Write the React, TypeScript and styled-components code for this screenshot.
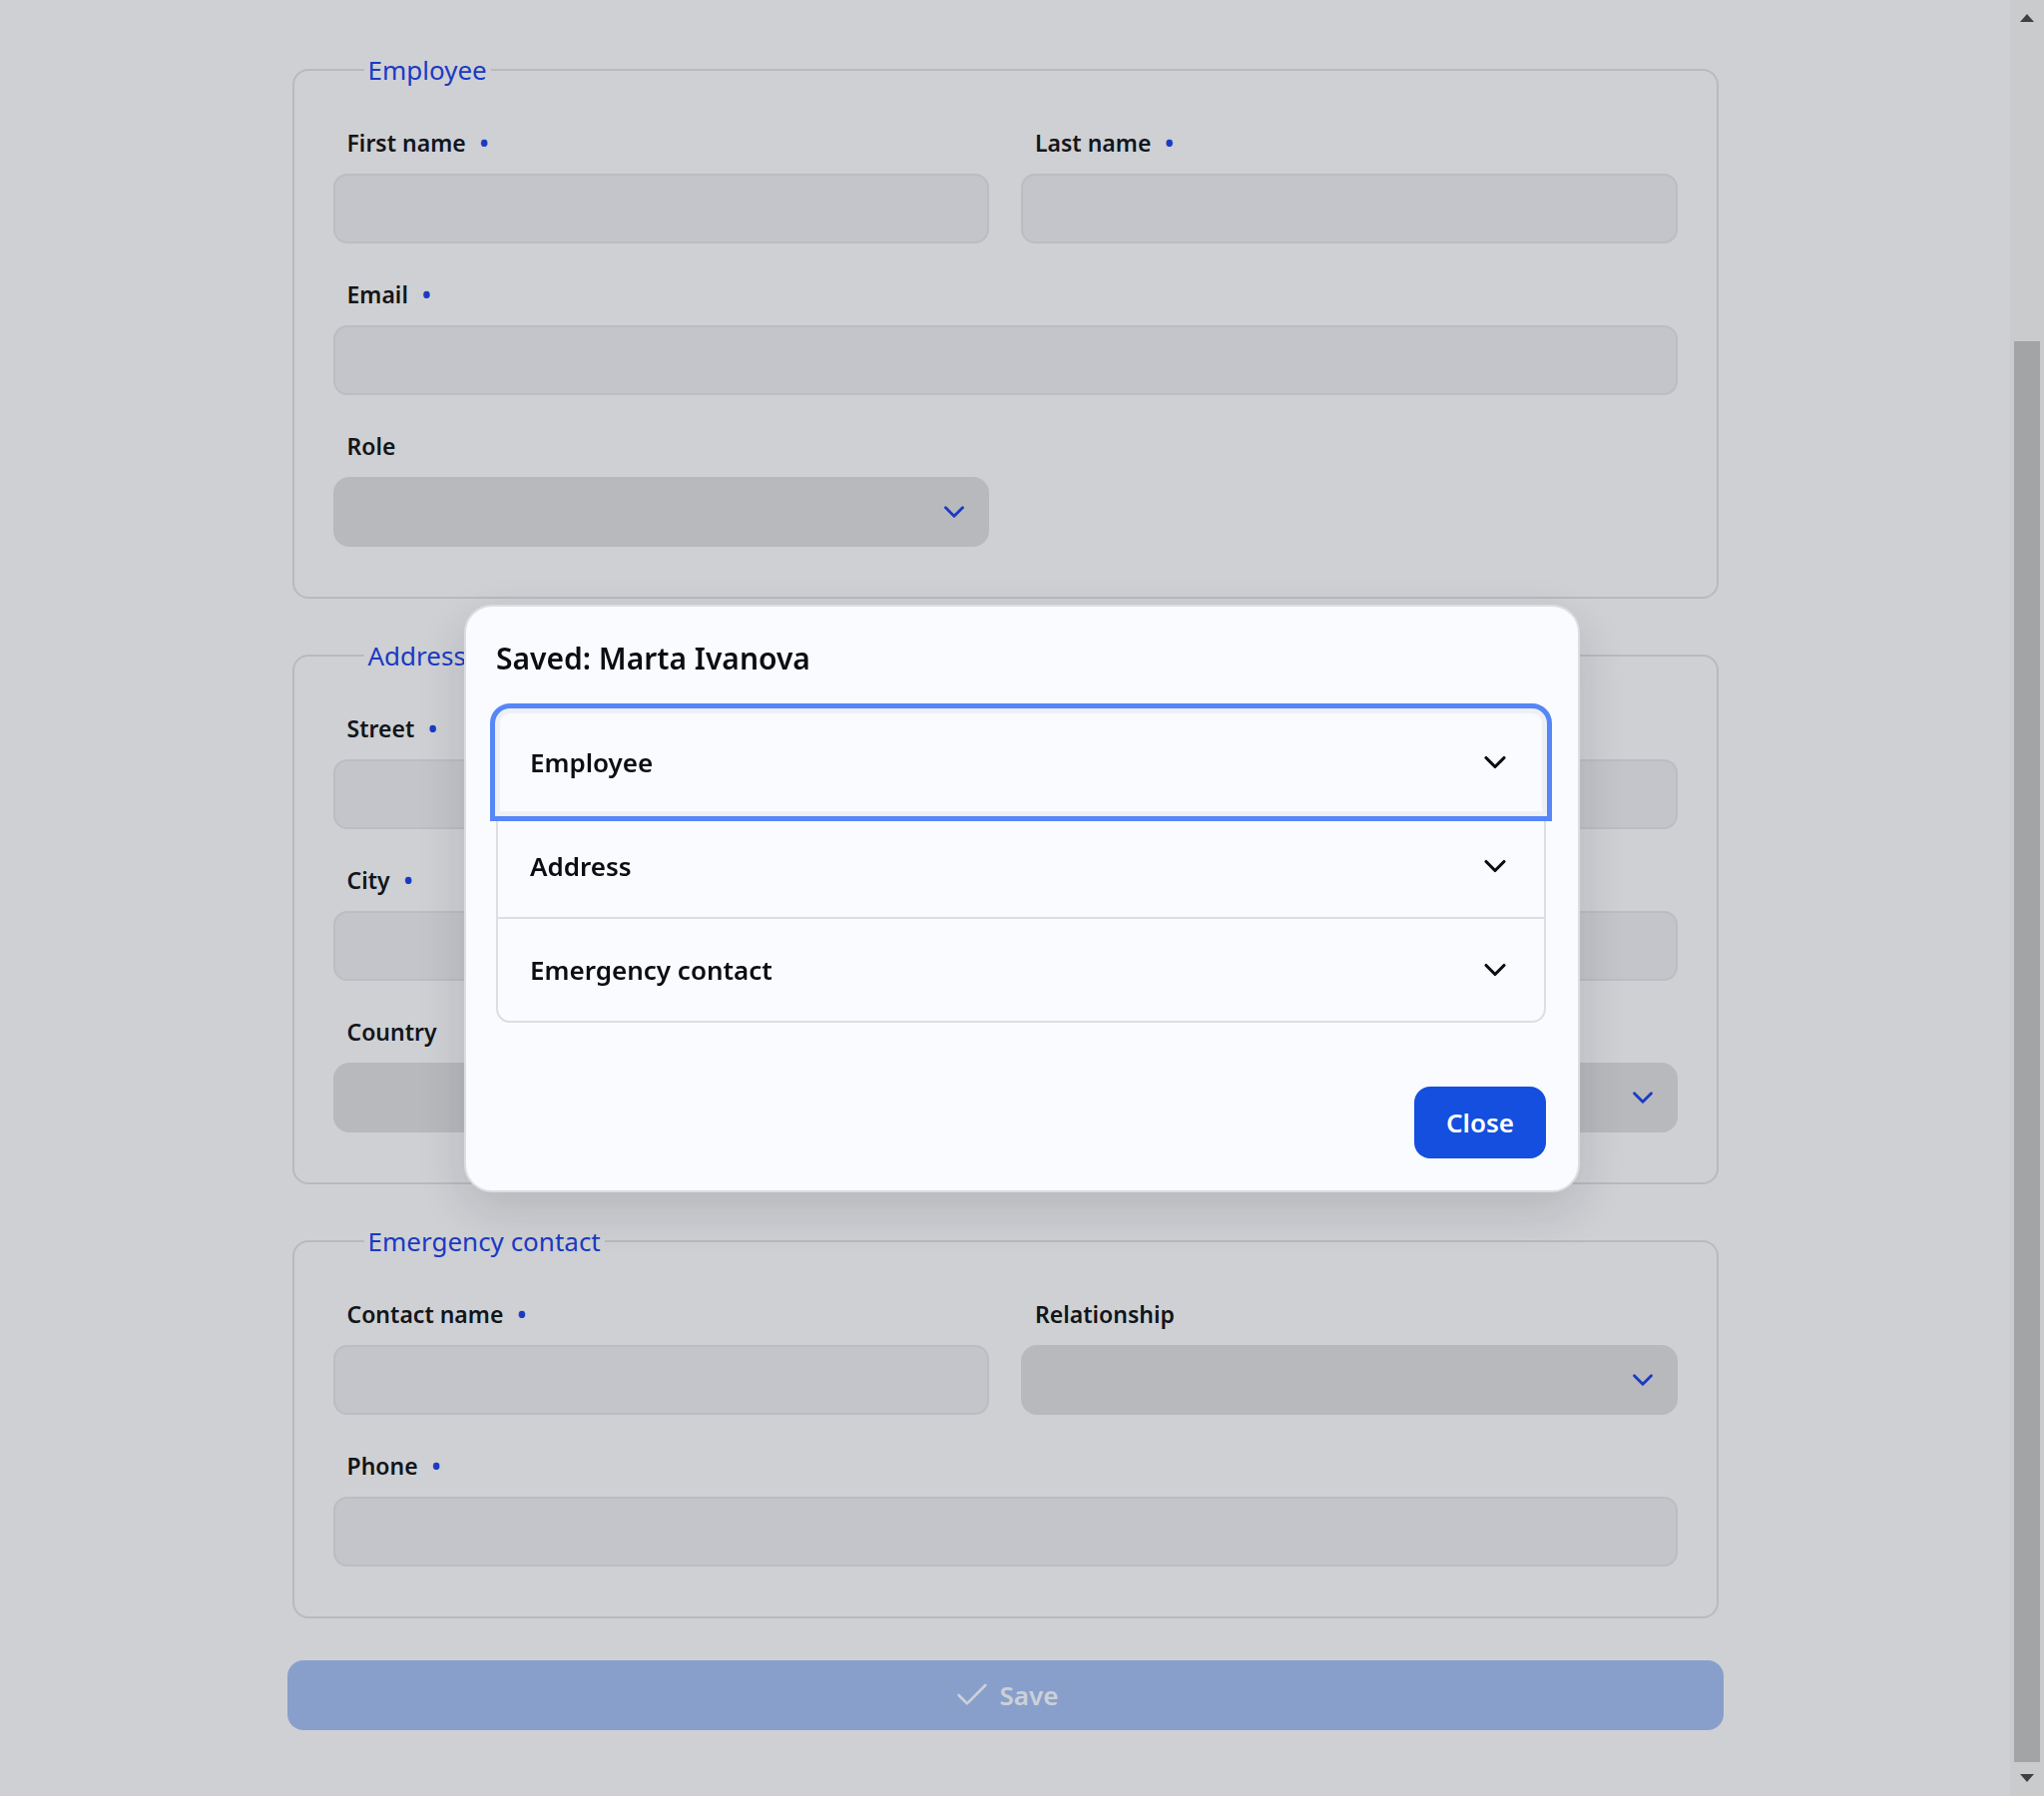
import React, { useCallback, useLayoutEffect, useRef, useState } from 'react'
import styled, { createGlobalStyle, css } from 'styled-components'
import { Check, ChevronDown } from 'lucide-react'

const GlobalStyle = createGlobalStyle`
  html, body {
    margin: 0;
    padding: 0;
    height: 100%;
    overflow: hidden;
    background: #f6f7fa;
    font-family: 'Noto Sans', 'Open Sans', sans-serif;
  }

  * {
    box-sizing: border-box;
  }
`

const Shell = styled.div`
  display: flex;
  height: 100vh;
`

const Page = styled.div`
  flex: 1;
  min-width: 0;
  overflow-y: scroll;
  scrollbar-width: none;
  padding: 442px 0 66px;

  &::-webkit-scrollbar {
    display: none;
  }
`

const ScrollBar = styled.div`
  width: 34px;
  flex: none;
  display: flex;
  flex-direction: column;
  background: #f1f1f1;
`

const ScrollButton = styled.div<{ $dir: 'up' | 'down' }>`
  height: 34px;
  flex: none;
  display: flex;
  align-items: center;
  justify-content: center;
  padding-top: ${(p) => (p.$dir === 'up' ? '2px' : '0')};
  padding-bottom: ${(p) => (p.$dir === 'down' ? '2px' : '0')};

  &::before {
    content: '';
    width: 0;
    height: 0;
    border-left: 7.5px solid transparent;
    border-right: 7.5px solid transparent;
    ${(p) =>
      p.$dir === 'up'
        ? css`
            border-bottom: 8px solid #474747;
          `
        : css`
            border-top: 8px solid #474747;
          `}
  }
`

const ScrollTrack = styled.div`
  flex: 1;
  display: flex;
  flex-direction: column;
`

const ScrollThumb = styled.div`
  margin: 0 4px;
  background: #c1c1c1;
`

const Form = styled.form`
  width: 1439px;
  margin: 0 auto;
  display: flex;
  flex-direction: column;
  gap: 39px;
`

const Section = styled.fieldset`
  margin: 0 5px;
  min-width: 0;
  border: 2px solid #dbdcde;
  border-radius: 16px;
  padding: 39px 39px 50px;
`

const Legend = styled.legend`
  margin-left: 31px;
  padding: 0 4px;
  font-size: 26px;
  line-height: 36px;
  font-weight: 400;
  color: #1c40e6;
`

const FieldGrid = styled.div`
  display: grid;
  grid-template-columns: 1fr 1fr;
  gap: 35px 32px;
`

const Field = styled.div<{ $wide?: boolean }>`
  display: flex;
  flex-direction: column;
  grid-column: ${(p) => (p.$wide ? '1 / -1' : 'auto')};
`

const Label = styled.label`
  display: flex;
  align-items: center;
  height: 32px;
  margin-bottom: 15px;
  padding-left: 14px;
  font-size: 23px;
  font-weight: 600;
  color: #111318;
`

const RequiredDot = styled.span`
  margin-left: 14px;
  color: #1c40e6;
  font-weight: 700;
`

const TextInput = styled.input`
  height: 70px;
  width: 100%;
  border: 2px solid #dfe0e2;
  border-radius: 14px;
  background: #e8e9ee;
  font: inherit;
  font-size: 24px;
  padding: 0 14px;
  outline: none;
`

const SelectBox = styled.button`
  height: 70px;
  width: 100%;
  display: flex;
  align-items: center;
  justify-content: flex-end;
  padding: 0 18px;
  border: none;
  border-radius: 16px;
  background: #dadbde;
  color: #1c40e6;
  cursor: pointer;
`

const SaveButton = styled.button`
  height: 70px;
  width: 100%;
  margin-top: 3px;
  display: flex;
  align-items: center;
  justify-content: center;
  gap: 8px;
  border: none;
  border-radius: 16px;
  background: #a2bbef;
  color: #f2f8ff;
  font-family: inherit;
  font-size: 26px;
  font-weight: 600;
`

const Backdrop = styled.div`
  position: fixed;
  inset: 0;
  background: rgba(30, 32, 40, 0.18);
  display: flex;
  align-items: center;
  justify-content: center;
`

const Dialog = styled.div`
  width: 1118px;
  padding: 30px 32px 32px 30px;
  background: #fafbfe;
  border: 2px solid #dcdde3;
  border-radius: 28px;
  box-shadow: 0 18px 48px rgba(20, 22, 30, 0.14);
`

const DialogTitle = styled.h2`
  margin: 0 0 29px;
  font-size: 30px;
  line-height: 44px;
  font-weight: 600;
  color: #0b0d12;
`

const Accordion = styled.div`
  border: 2px solid #dcdee3;
  border-radius: 14px;
`

const AccordionItem = styled.div`
  & + & {
    border-top: 2px solid #dcdee3;
  }
`

const AccordionHeader = styled.button<{ $focused?: boolean; $first?: boolean; $last?: boolean }>`
  width: 100%;
  height: 102px;
  display: flex;
  align-items: center;
  justify-content: space-between;
  padding: 0 31px 0 32px;
  border: none;
  background: transparent;
  font-family: inherit;
  font-size: 26px;
  font-weight: 600;
  color: #0b0d12;
  cursor: pointer;
  border-radius: ${(p) => (p.$first ? '12px 12px 0 0' : p.$last ? '0 0 12px 12px' : '0')};

  ${(p) =>
    p.$focused &&
    css`
      position: relative;
      z-index: 1;
      outline: 5px solid #5686f7;
      outline-offset: 3px;
      box-shadow: 0 0 0 3px #eef0f5, inset 0 0 0 2px #eef0f5;
    `}
`

const DialogFooter = styled.div`
  display: flex;
  justify-content: flex-end;
  margin-top: 64px;
`

const CloseButton = styled.button`
  width: 132px;
  height: 72px;
  border: none;
  border-radius: 16px;
  background: #144fdf;
  color: #ffffff;
  font-family: inherit;
  font-size: 26px;
  font-weight: 600;
  cursor: pointer;
`

type FieldDef = {
  label: string
  required?: boolean
  wide?: boolean
  select?: boolean
}

type SectionDef = {
  title: string
  fields: FieldDef[]
}

const sections: SectionDef[] = [
  {
    title: 'Employee',
    fields: [
      { label: 'First name', required: true },
      { label: 'Last name', required: true },
      { label: 'Email', required: true, wide: true },
      { label: 'Role', select: true }
    ]
  },
  {
    title: 'Address',
    fields: [
      { label: 'Street', required: true, wide: true },
      { label: 'City', required: true },
      { label: 'Postal code', required: true },
      { label: 'Country', select: true, wide: true }
    ]
  },
  {
    title: 'Emergency contact',
    fields: [
      { label: 'Contact name', required: true },
      { label: 'Relationship', select: true },
      { label: 'Phone', required: true, wide: true }
    ]
  }
]

const FormSection: React.FC<{ section: SectionDef }> = ({ section }) => (
  <Section>
    <Legend>{section.title}</Legend>
    <FieldGrid>
      {section.fields.map((field) => (
        <Field key={field.label} $wide={field.wide}>
          <Label>
            {field.label}
            {field.required && <RequiredDot>•</RequiredDot>}
          </Label>
          {field.select ? (
            <SelectBox type="button" aria-label={field.label}>
              <ChevronDown size={34} strokeWidth={2} />
            </SelectBox>
          ) : (
            <TextInput aria-label={field.label} />
          )}
        </Field>
      ))}
    </FieldGrid>
  </Section>
)

export default function App() {
  const pageRef = useRef<HTMLDivElement>(null)
  const trackRef = useRef<HTMLDivElement>(null)
  const [thumb, setThumb] = useState({ top: 0, height: 0 })

  // Keep the drawn scrollbar in step with the page scroll
  const syncThumb = useCallback(() => {
    const el = pageRef.current
    const track = trackRef.current
    if (!el || !track) return
    const trackHeight = track.clientHeight
    setThumb({
      top: (trackHeight * el.scrollTop) / el.scrollHeight,
      height: (trackHeight * el.clientHeight) / el.scrollHeight
    })
  }, [])

  // Form is scrolled all the way down when the dialog opens
  useLayoutEffect(() => {
    const el = pageRef.current
    if (el) el.scrollTop = el.scrollHeight
    syncThumb()
  }, [syncThumb])

  return (
    <>
      <GlobalStyle />
      <Shell>
        <Page ref={pageRef} onScroll={syncThumb}>
          <Form onSubmit={(e) => e.preventDefault()}>
            {sections.map((section) => (
              <FormSection key={section.title} section={section} />
            ))}
            <SaveButton type="submit" disabled>
              <Check size={40} strokeWidth={1.6} />
              Save
            </SaveButton>
          </Form>
        </Page>
        <ScrollBar aria-hidden="true">
          <ScrollButton $dir="up" />
          <ScrollTrack ref={trackRef}>
            <ScrollThumb style={{ marginTop: thumb.top, height: thumb.height }} />
          </ScrollTrack>
          <ScrollButton $dir="down" />
        </ScrollBar>
      </Shell>

      <Backdrop>
        <Dialog role="dialog" aria-modal="true">
          <DialogTitle>Saved: Marta Ivanova</DialogTitle>
          <Accordion>
            {sections.map((section, index) => (
              <AccordionItem key={section.title}>
                <AccordionHeader
                  type="button"
                  $focused={index === 0}
                  $first={index === 0}
                  $last={index === sections.length - 1}
                >
                  {section.title}
                  <ChevronDown size={36} strokeWidth={2.1} />
                </AccordionHeader>
              </AccordionItem>
            ))}
          </Accordion>
          <DialogFooter>
            <CloseButton type="button">Close</CloseButton>
          </DialogFooter>
        </Dialog>
      </Backdrop>
    </>
  )
}
